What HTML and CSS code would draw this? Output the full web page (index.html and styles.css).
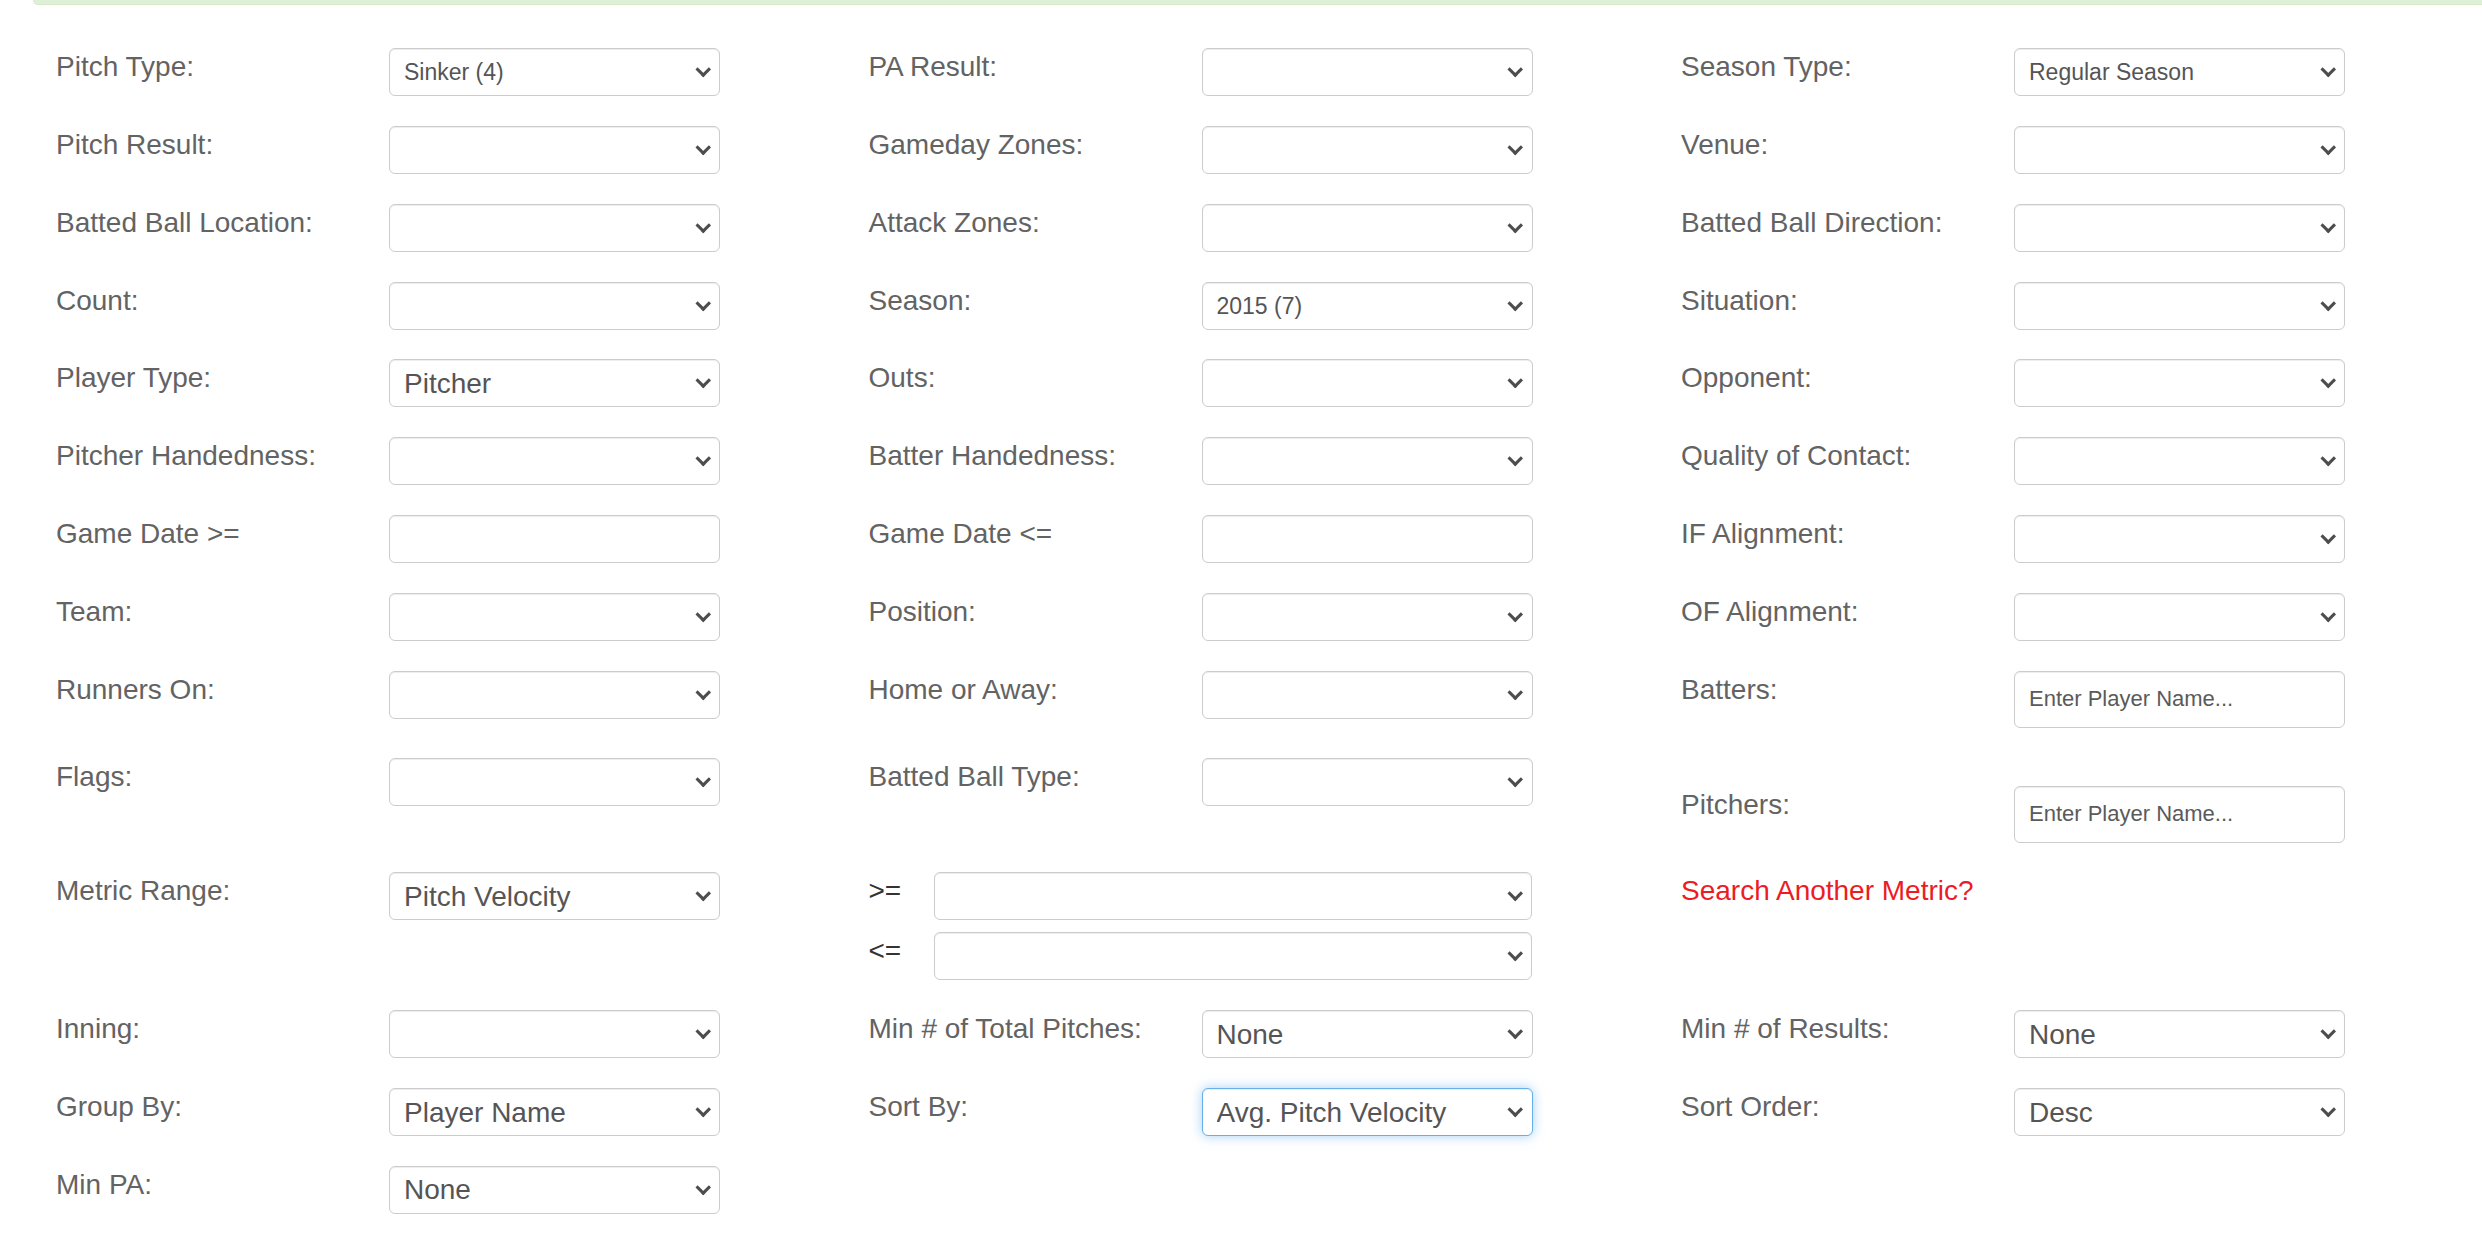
FILE: index.html
```html
<!DOCTYPE html>
<html lang="en">
<head>
<meta charset="utf-8">
<title>Search Filters</title>
<link rel="stylesheet" href="styles.css">
</head>
<body>
<div class="alert-tail"></div>
<form class="filters">
  <!-- Row 1 -->
  <div class="field"><label class="lbl">Pitch Type:</label><span class="sel"><select class="ctl sm"><option>Sinker (4)</option></select></span></div>
  <div class="field"><label class="lbl">PA Result:</label><span class="sel"><select class="ctl"><option></option></select></span></div>
  <div class="field"><label class="lbl">Season Type:</label><span class="sel"><select class="ctl sm"><option>Regular Season</option></select></span></div>
  <!-- Row 2 -->
  <div class="field"><label class="lbl">Pitch Result:</label><span class="sel"><select class="ctl"><option></option></select></span></div>
  <div class="field"><label class="lbl">Gameday Zones:</label><span class="sel"><select class="ctl"><option></option></select></span></div>
  <div class="field"><label class="lbl">Venue:</label><span class="sel"><select class="ctl"><option></option></select></span></div>
  <!-- Row 3 -->
  <div class="field"><label class="lbl">Batted Ball Location:</label><span class="sel"><select class="ctl"><option></option></select></span></div>
  <div class="field"><label class="lbl">Attack Zones:</label><span class="sel"><select class="ctl"><option></option></select></span></div>
  <div class="field"><label class="lbl">Batted Ball Direction:</label><span class="sel"><select class="ctl"><option></option></select></span></div>
  <!-- Row 4 -->
  <div class="field"><label class="lbl">Count:</label><span class="sel"><select class="ctl"><option></option></select></span></div>
  <div class="field"><label class="lbl">Season:</label><span class="sel"><select class="ctl sm"><option>2015 (7)</option></select></span></div>
  <div class="field"><label class="lbl">Situation:</label><span class="sel"><select class="ctl"><option></option></select></span></div>
  <!-- Row 5 -->
  <div class="field"><label class="lbl">Player Type:</label><span class="sel"><select class="ctl"><option>Pitcher</option></select></span></div>
  <div class="field"><label class="lbl">Outs:</label><span class="sel"><select class="ctl"><option></option></select></span></div>
  <div class="field"><label class="lbl">Opponent:</label><span class="sel"><select class="ctl"><option></option></select></span></div>
  <!-- Row 6 -->
  <div class="field"><label class="lbl">Pitcher Handedness:</label><span class="sel"><select class="ctl"><option></option></select></span></div>
  <div class="field"><label class="lbl">Batter Handedness:</label><span class="sel"><select class="ctl"><option></option></select></span></div>
  <div class="field"><label class="lbl">Quality of Contact:</label><span class="sel"><select class="ctl"><option></option></select></span></div>
  <!-- Row 7 -->
  <div class="field"><label class="lbl">Game Date &gt;=</label><input class="ctl txt" type="text"></div>
  <div class="field"><label class="lbl">Game Date &lt;=</label><input class="ctl txt" type="text"></div>
  <div class="field"><label class="lbl">IF Alignment:</label><span class="sel"><select class="ctl"><option></option></select></span></div>
  <!-- Row 8 -->
  <div class="field"><label class="lbl">Team:</label><span class="sel"><select class="ctl"><option></option></select></span></div>
  <div class="field"><label class="lbl">Position:</label><span class="sel"><select class="ctl"><option></option></select></span></div>
  <div class="field"><label class="lbl">OF Alignment:</label><span class="sel"><select class="ctl"><option></option></select></span></div>
  <!-- Row 9 -->
  <div class="field"><label class="lbl">Runners On:</label><span class="sel"><select class="ctl"><option></option></select></span></div>
  <div class="field"><label class="lbl">Home or Away:</label><span class="sel"><select class="ctl"><option></option></select></span></div>
  <div class="field"><label class="lbl">Batters:</label><input class="ctl txt tall ph" type="text" placeholder="Enter Player Name..."></div>
  <!-- Row 10 -->
  <div class="field"><label class="lbl">Flags:</label><span class="sel"><select class="ctl"><option></option></select></span></div>
  <div class="field"><label class="lbl">Batted Ball Type:</label><span class="sel"><select class="ctl"><option></option></select></span></div>
  <div class="field offset"><label class="lbl">Pitchers:</label><input class="ctl txt tall ph" type="text" placeholder="Enter Player Name..."></div>
  <!-- Row 11 -->
  <div class="field"><label class="lbl">Metric Range:</label><span class="sel"><select class="ctl"><option>Pitch Velocity</option></select></span></div>
  <div class="range">
    <div class="field"><label class="lbl">&gt;=</label><span class="sel"><select class="ctl"><option></option></select></span></div>
    <div class="field"><label class="lbl">&lt;=</label><span class="sel"><select class="ctl"><option></option></select></span></div>
  </div>
  <div class="field"><a class="link" href="#">Search Another Metric?</a></div>
  <!-- Row 12 -->
  <div class="field"><label class="lbl">Inning:</label><span class="sel"><select class="ctl"><option></option></select></span></div>
  <div class="field"><label class="lbl">Min # of Total Pitches:</label><span class="sel"><select class="ctl"><option>None</option></select></span></div>
  <div class="field"><label class="lbl">Min # of Results:</label><span class="sel"><select class="ctl"><option>None</option></select></span></div>
  <!-- Row 13 -->
  <div class="field"><label class="lbl">Group By:</label><span class="sel"><select class="ctl"><option>Player Name</option></select></span></div>
  <div class="field"><label class="lbl">Sort By:</label><span class="sel"><select class="ctl focus"><option>Avg. Pitch Velocity</option></select></span></div>
  <div class="field"><label class="lbl">Sort Order:</label><span class="sel"><select class="ctl"><option>Desc</option></select></span></div>
  <!-- Row 14 -->
  <div class="field"><label class="lbl">Min PA:</label><span class="sel"><select class="ctl"><option>None</option></select></span></div>
</form>
</body>
</html>
```

FILE: styles.css
```css
html, body {
  margin: 0;
  padding: 0;
  background: #fff;
}

body {
  font-family: "Liberation Sans", Arial, Helvetica, sans-serif;
  width: 2482px;
  height: 1234px;
  overflow: hidden;
}

.alert-tail {
  margin-left: 33px;
  height: 4px;
  background: #dff0d8;
  border-left: 1px solid #d6e9c6;
  border-bottom: 1px solid #d6e9c6;
  border-bottom-left-radius: 6px;
}

.filters {
  display: grid;
  grid-template-columns: repeat(3, 812.5px);
  row-gap: 29.85px;
  align-items: start;
  padding: 43px 0 0 41px;
  margin: 0;
}

.field {
  display: flex;
  align-items: flex-start;
  padding-left: 15px;
}

.field.offset {
  margin-top: 28px;
}

.lbl {
  flex: none;
  width: 333px;
  font-size: 28px;
  line-height: 37px;
  color: #636363;
}

.sel {
  position: relative;
  display: block;
  flex: none;
  width: 331px;
}

.sel::after {
  content: "";
  position: absolute;
  right: 12px;
  top: 50%;
  width: 7.5px;
  height: 7.5px;
  border-right: 3.5px solid #4d4d4d;
  border-bottom: 3.5px solid #4d4d4d;
  transform: translateY(-78%) rotate(45deg);
  pointer-events: none;
}

.ctl {
  display: block;
  flex: none;
  box-sizing: border-box;
  width: 331px;
  height: 48px;
  margin: 0;
  padding: 0 40px 0 14px;
  border: 1px solid #ccc;
  border-radius: 6px;
  background: #fff;
  box-shadow: inset 0 1px 1px rgba(0, 0, 0, 0.075);
  font-family: "Liberation Sans", Arial, Helvetica, sans-serif;
  font-size: 28px;
  color: #555;
  -webkit-appearance: none;
  appearance: none;
  outline: none;
}

.ctl.sm {
  font-size: 23px;
}

.ctl.ph {
  font-size: 22px;
}

.ctl.txt {
  padding-right: 14px;
}

.ctl.tall {
  height: 57px;
}

.ctl::placeholder {
  color: #5a5a5a;
  opacity: 1;
}

.ctl.focus {
  border-color: #66afe9;
  box-shadow: inset 0 1px 1px rgba(0, 0, 0, 0.075), 0 0 12px rgba(102, 175, 233, 0.6);
}

.range {
  display: flex;
  flex-direction: column;
  gap: 12px;
}

.range .lbl {
  width: 65.5px;
  color: #333;
}

.range .sel,
.range .ctl {
  width: 598px;
}

.link {
  font-size: 28px;
  line-height: 37px;
  color: #ec1c24;
  text-decoration: none;
}
```
